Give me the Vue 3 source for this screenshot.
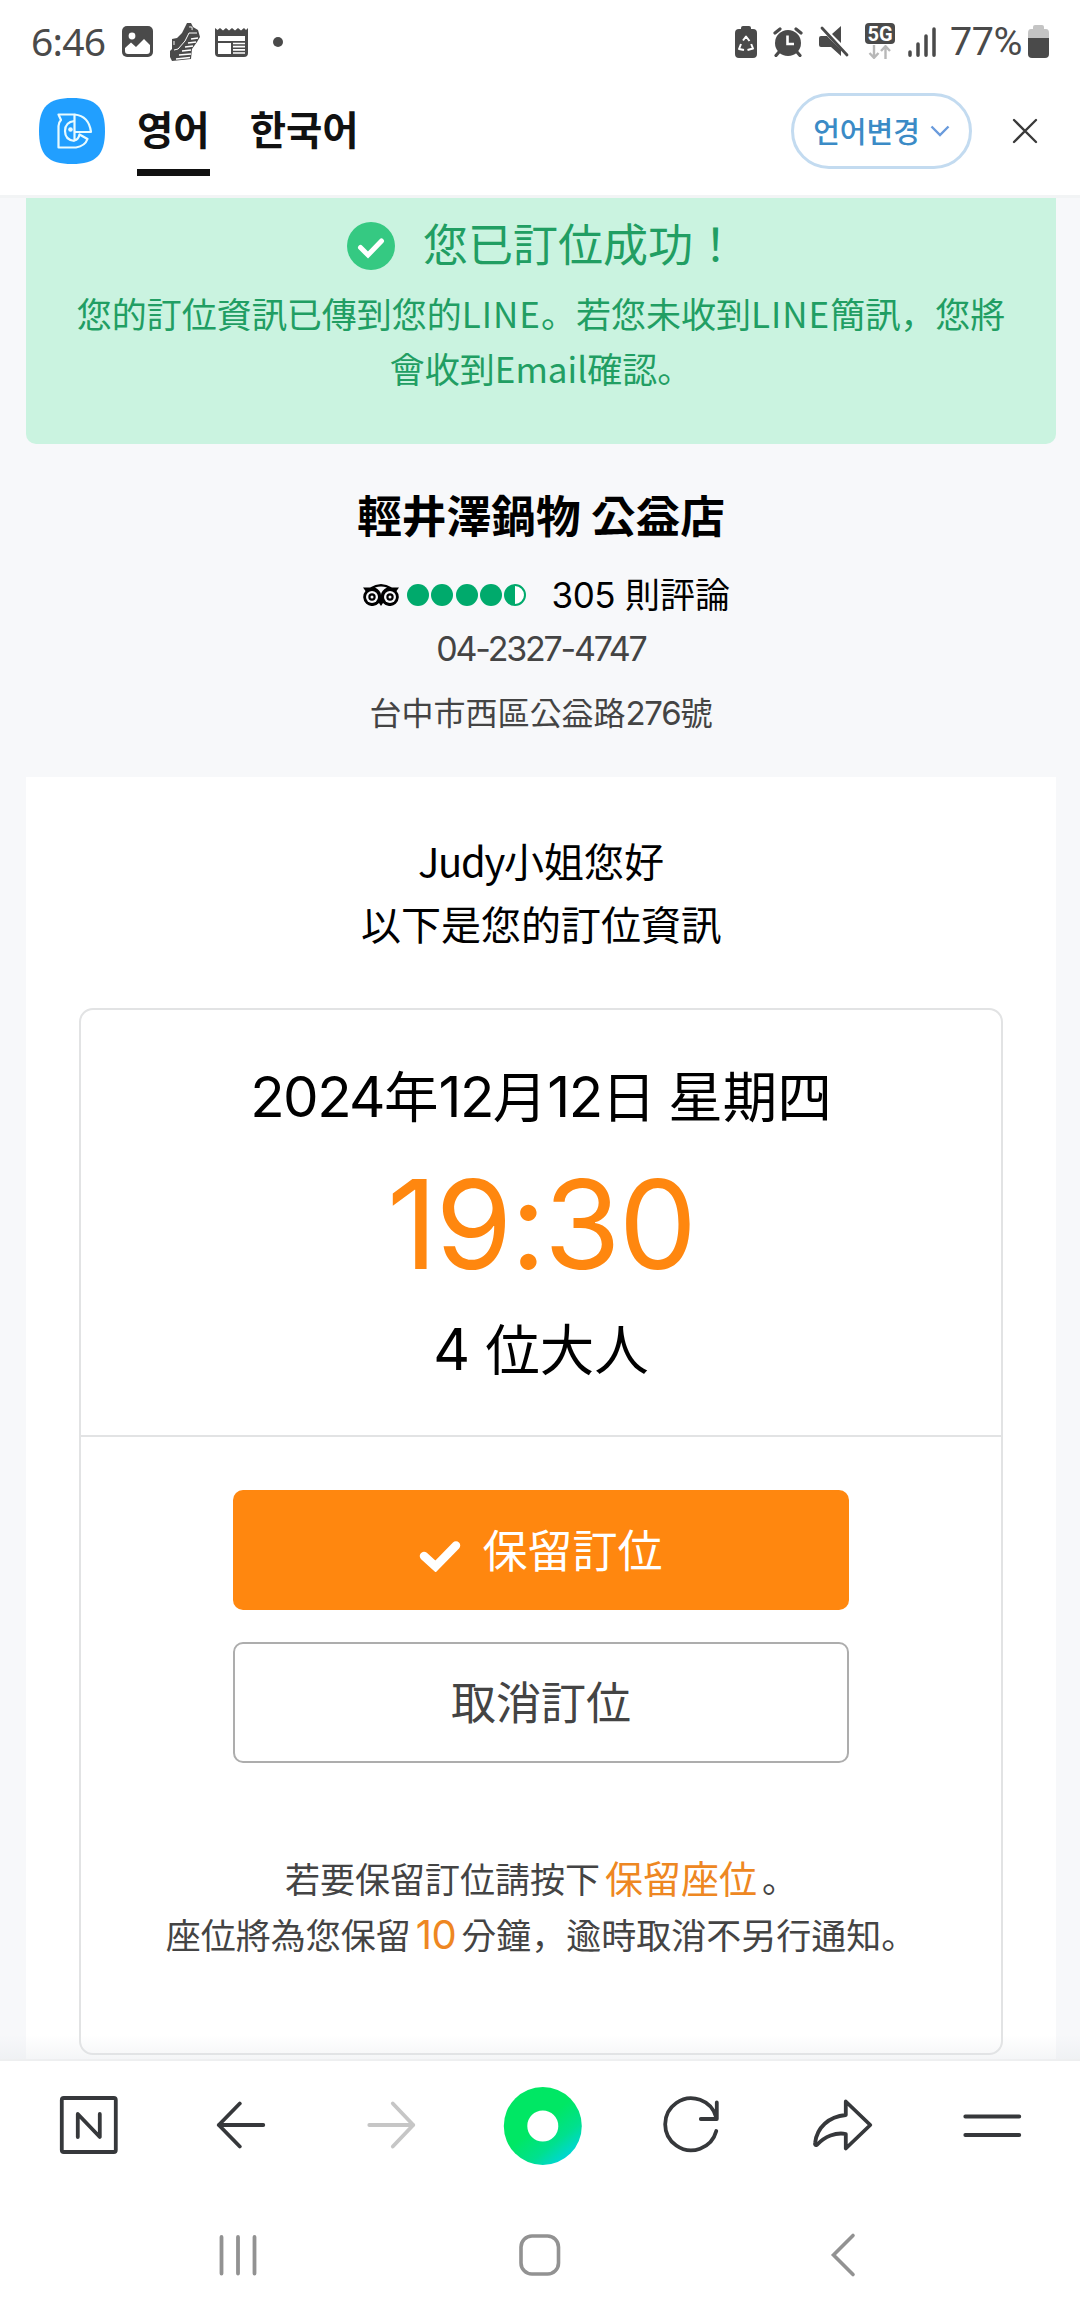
<template>
  <div class="phone">
    <div class="status-bar">
      <div class="status-left">
        <span class="clock">6:46</span>
        <svg class="ic-image" width="31" height="31" viewBox="0 0 31 31">
          <rect width="31" height="31" rx="5" fill="#4a4a4a" />
          <circle cx="10" cy="10" r="3.4" fill="#fff" />
          <path d="M3 22 L9 16.500 L14 21 L22 13 L28 19 V25 Q28 28 25 28 H6 Q3 28 3 25 Z" fill="#fff" />
        </svg>
        <svg class="ic-shoe" width="32" height="40" viewBox="0 0 32 40">
          <path d="M17 3 L18 1 L22 1 L24 5 L29 8 L31 15 L28 20 L23 27 L22 37 L3 39 L1 35 L1 29 L3 27 V17 L8 16 L13 11 Z" fill="#4a4a4a" />
          <path d="M5 28 L9 27 L16 19 L20 11 L28 11" fill="none" stroke="#fff" stroke-width="1" />
          <path d="M22 17 L29 16 M19 21 L27 20 M16 25 L24 24 M13 29 L22 28 M10 33 L22 32 M7 37 L21 35.500" stroke="#fff" stroke-width="1.500" />
          <path d="M20 5 Q24 4 23 8 M5 19 V23" fill="none" stroke="#ddd" stroke-width="1.200" />
        </svg>
        <svg class="ic-news" width="33" height="30" viewBox="0 0 33 30">
          <path d="M0 1 L2.500 3 L5 1 L8 3.500 L11 1 L14 3.500 L17 1 L20 3.500 L23 1 L26 3.500 L29 1 L31 3 L33 1 V26 Q33 30 29 30 H4 Q0 30 0 26 Z" fill="#4a4a4a" />
          <path d="M3 9 H30 V14 H3 Z M3 16 H16 V27 H3 Z" fill="#fff" />
          <path d="M18 16.500 H30 M18 19.700 H30 M18 22.900 H30 M18 26 H30" stroke="#fff" stroke-width="1.700" />
        </svg>
        <span class="dot"></span>
      </div>
      <div class="status-right">
        <svg class="ic-saver" width="22" height="32" viewBox="0 0 22 32">
          <path d="M6 3 V2 Q6 0 8 0 H14 Q16 0 16 2 V3 H18 Q22 3 22 7 V28 Q22 32 18 32 H4 Q0 32 0 28 V7 Q0 3 4 3 Z" fill="#4a4a4a" />
          <path d="M8 14.500 L11 10.500 L14.500 15 M16.200 18 L18 22.500 L12.500 24 M9 24 L4 23 L6 18" fill="none" stroke="#fff" stroke-width="2" stroke-linejoin="round" />
        </svg>
        <svg class="ic-alarm" width="30" height="30" viewBox="0 0 30 30">
          <circle cx="15" cy="16" r="13" fill="#4a4a4a" />
          <path d="M2 6 L7 2 M28 6 L23 2 M6 25 L3 28.500 M24 25 L27 28.500" stroke="#4a4a4a" stroke-width="3.200" stroke-linecap="round" />
          <path d="M14.500 8.500 V17 H21" fill="none" stroke="#fff" stroke-width="2.600" />
        </svg>
        <svg class="ic-mute" width="30" height="31" viewBox="0 0 30 31">
          <path d="M0 12 Q0 10 2 10 H8 L22 24 V30 L12 21 H2 Q0 21 0 19 Z M13 8 L22 0 V17 Z" fill="#4a4a4a" />
          <path d="M3 2 L28 29" stroke="#4a4a4a" stroke-width="2.800" stroke-linecap="round" />
        </svg>
        <div class="network">
          <span class="net-label">5G</span>
          <svg width="24" height="14" viewBox="0 0 24 14">
            <path d="M6 0 V12.500 M1.500 8 L6 12.800 L10.500 8 M17.500 14 V1.500 M13 6 L17.500 1.200 L22 6" fill="none" stroke="#b8b8b8" stroke-width="2.400" />
          </svg>
        </div>
        <svg class="ic-signal" width="28" height="30" viewBox="0 0 28 30">
          <path d="M2 25 V28.200 M10 17 V28.200 M18 9 V28.200 M26 2 V28.200" stroke="#4a4a4a" stroke-width="3.500" stroke-linecap="round" />
        </svg>
        <span class="percent">77%</span>
        <svg class="ic-battery" width="21" height="33" viewBox="0 0 21 33">
          <path d="M5 4 V2 Q5 0 7 0 H14 Q16 0 16 2 V4 H18 Q21 4 21 8 V13 H0 V8 Q0 4 3 4 Z" fill="#c4c4c4" />
          <path d="M0 13 H21 V29 Q21 33 17 33 H4 Q0 33 0 29 Z" fill="#4a4a4a" />
        </svg>
      </div>
    </div>

    <div class="translate-bar">
      <svg class="logo" width="66" height="66" viewBox="0 0 66 66">
        <path d="M33 0 C57 0 66 9 66 33 C66 57 57 66 33 66 C9 66 0 57 0 33 C0 9 9 0 33 0 Z" fill="#219fff" />
        <g fill="none" stroke="#e8fbff" stroke-width="2.200" stroke-linejoin="round">
          <path d="M35.500 16.500 H19.500 L22 22 Q19.500 24.500 19.500 28 V49.500 H37 Q46 48 48.500 41 L40.500 36.500 Q39.500 41.500 35.500 42.500 Z" />
          <path d="M35.500 16.500 Q50 18 52 34 H35.500" />
          <path d="M35.500 23 Q26 24 26 33 Q26 42 35.500 43" />
        </g>
        <circle cx="31.500" cy="31.500" r="2.300" fill="#e8fbff" />
      </svg>
      <div class="langs">
        <button
          v-for="lang in langs"
          :key="lang"
          class="lang"
          :class="{ active: lang === current }"
          @click="current = lang"
        >{{ lang }}</button>
      </div>
      <button class="change">
        <span>언어변경</span>
        <svg width="20" height="12" viewBox="0 0 20 12">
          <path d="M1.500 1.500 L10 10 L18.500 1.500" fill="none" stroke="#6a9bdc" stroke-width="2.400" />
        </svg>
      </button>
      <svg class="close" width="26" height="26" viewBox="0 0 26 26">
        <path d="M2 2 L24 24 M24 2 L2 24" stroke="#3a3a3a" stroke-width="2.300" stroke-linecap="round" />
      </svg>
    </div>

    <div class="page">
      <div class="banner">
        <div class="banner-title">
          <svg width="48" height="48" viewBox="0 0 48 48">
            <circle cx="24" cy="24" r="24" fill="#35c982" />
            <path d="M13.500 25.500 L21 33 L34.500 19" fill="none" stroke="#fff" stroke-width="5" stroke-linecap="round" stroke-linejoin="miter" />
          </svg>
          <span>您已訂位成功！</span>
        </div>
        <p class="banner-text">您的訂位資訊已傳到您的<span class="latin">LINE</span>。若您未收到<span class="latin">LINE</span>簡訊，您將<br>會收到<span class="email">Email</span>確認。</p>
      </div>

      <div class="shop">
        <h1>輕井澤鍋物 公益店</h1>
        <div class="rating">
          <svg class="owl" width="36" height="22" viewBox="0 0 36 22">
            <path d="M0 3.500 H7 Q18 -3.500 29 3.500 H36 L33.500 7 A9 9 0 1 1 20 19 L18 22 L16 19 A9 9 0 1 1 2.500 7 Z" fill="#000" />
            <path d="M12 3.500 Q18 1.500 24 3.500 Q18.500 6 18 11 Q17.500 6 12 3.500 Z" fill="#f7f8fa" />
            <circle cx="9" cy="13" r="6" fill="#f7f8fa" />
            <circle cx="27" cy="13" r="6" fill="#f7f8fa" />
            <circle cx="9" cy="13" r="3.700" fill="#000" />
            <circle cx="27" cy="13" r="3.700" fill="#000" />
            <circle cx="9" cy="13" r="1.500" fill="#f7f8fa" />
            <circle cx="27" cy="13" r="1.500" fill="#f7f8fa" />
          </svg>
          <i v-for="n in 4" :key="n" class="bubble"></i>
          <i class="bubble half"></i>
          <span class="reviews"><b>305</b> 則評論</span>
        </div>
        <div class="tel">04-2327-4747</div>
        <div class="address">台中市西區公益路<b>276</b>號</div>
      </div>

      <div class="sheet">
        <p class="greeting"><span class="name">Judy</span>小姐您好<br>以下是您的訂位資訊</p>
        <div class="card">
          <div class="booking">
            <div class="date"><b>2024</b>年<b>12</b>月<b>12</b>日 星期四</div>
            <div class="time">19:30</div>
            <div class="people"><b>4</b> 位大人</div>
          </div>
          <div class="actions">
            <button class="btn keep">
              <svg width="42" height="32" viewBox="0 0 42 32">
                <path d="M5 16 L16.500 26.500 L37 5.500" fill="none" stroke="#fff" stroke-width="8.500" stroke-linecap="round" />
              </svg>
              <span>保留訂位</span>
            </button>
            <button class="btn cancel">取消訂位</button>
            <p class="hint">若要保留訂位請按下<em>保留座位</em>。<br>座位將為您保留<em class="num">10</em>分鐘，逾時取消不另行通知。</p>
          </div>
        </div>
      </div>
      <div class="fade"></div>
    </div>

    <div class="toolbar">
      <svg viewBox="0 0 100 100">
        <rect x="23.500" y="23" width="54" height="54" rx="2" />
        <path d="M39.500 62 V39 L61.500 62 V39" />
      </svg>
      <svg viewBox="0 0 100 100">
        <path d="M74 50 H29.500 M50.500 28.500 L29.500 50 L50.500 71.500" />
      </svg>
      <svg class="disabled" viewBox="0 0 100 100">
        <path d="M30 50 H74 M53.500 28.500 L74 50 L53.500 71.500" />
      </svg>
      <svg viewBox="0 0 100 100">
        <defs>
          <linearGradient id="home" x1="0.300" y1="0.200" x2="0.850" y2="0.900">
            <stop offset="0.350" stop-color="#00e764" />
            <stop offset="0.700" stop-color="#00e08e" />
            <stop offset="1" stop-color="#00d5dc" />
          </linearGradient>
        </defs>
        <circle class="plain" cx="52.500" cy="51" r="39" fill="url(#home)" />
        <circle class="plain" cx="52.500" cy="51" r="15.500" fill="#fff" />
      </svg>
      <svg viewBox="0 0 100 100">
        <path d="M76 56 A26 26 0 1 1 76 42.500 M76.500 27.500 V44 H60.500" />
      </svg>
      <svg viewBox="0 0 100 100">
        <path d="M54.500 26.500 L79 50 L54.500 73.500 V59 C44.500 57 33.500 61.500 25.500 70 C24 70.500 23.500 69.500 23.800 68 C25.500 52.500 37.500 41.500 54.500 40 Z" />
      </svg>
      <svg viewBox="0 0 100 100">
        <path d="M24 41.500 H78 M24 60 H78" />
      </svg>
    </div>

    <div class="sys-nav">
      <svg viewBox="0 0 60 60">
        <path d="M13.500 12 V48.500 M30 12 V48.500 M46.500 12 V48.500" stroke-width="3.800" />
      </svg>
      <svg viewBox="0 0 60 60">
        <rect x="11" y="11" width="37.500" height="38" rx="11" />
      </svg>
      <svg viewBox="0 0 60 60">
        <path d="M41 10.500 L21.500 30 L41 49.500" />
      </svg>
    </div>
  </div>
</template>

<script setup>
import { ref } from 'vue'

const langs = ['영어', '한국어']
const current = ref('영어')
</script>

<style>
body {
  background: #fff;
}
</style>

<style scoped>
.phone {
  display: flex;
  flex-direction: column;
  width: 1080px;
  height: 2316px;
  overflow: hidden;
  background: #fff;
  font-family: 'Noto Sans CJK KR', 'Noto Sans CJK TC', sans-serif;
  color: #000;
}

svg {
  display: block;
  flex: none;
}

button {
  font: inherit;
  background: none;
  border: 0;
  padding: 0;
  white-space: nowrap;
}

p,
h1 {
  margin: 0;
}

/* digits sit in their own face next to the CJK text */
b {
  font-family: Inter, sans-serif;
  font-weight: 400;
  line-height: 1;
}

/* status bar */
.status-bar {
  display: flex;
  justify-content: space-between;
  align-items: center;
  flex: none;
  height: 83px;
  padding: 0 31px;
  color: #4a4a4a;
}

.status-left,
.status-right {
  display: flex;
  align-items: center;
}

.clock {
  width: 91px;
  margin-top: -2px;
  font: 39px/1 'Noto Sans', sans-serif;
  letter-spacing: -0.8px;
}

.ic-shoe {
  margin-left: 16px;
}

.ic-news {
  margin-left: 14px;
}

.dot {
  width: 10px;
  height: 10px;
  margin-left: 25px;
  border-radius: 50%;
  background: #4a4a4a;
}

.ic-alarm {
  margin-left: 16px;
}

.ic-mute {
  margin-left: 16px;
}

.network {
  display: flex;
  flex-direction: column;
  align-items: center;
  width: 30px;
  height: 38px;
  gap: 1px;
  margin-left: 16px;
}

.net-label {
  width: 30px;
  height: 21px;
  border-radius: 4px;
  background: #4a4a4a;
  color: #fff;
  font: bold 20px/22px Roboto, sans-serif;
  text-align: center;
}

.ic-signal {
  margin-left: 13px;
}

.percent {
  margin-left: 14px;
  width: 78px;
  font: 400 39.5px/1 Roboto, sans-serif;
  letter-spacing: -0.5px;
}

/* translate bar */
.translate-bar {
  display: flex;
  align-items: center;
  flex: none;
  box-sizing: border-box;
  height: 115px;
  padding: 0 42px 16px 39px;
  border-bottom: 3px solid #f2f4f5;
}

.langs {
  display: flex;
  gap: 40px;
  margin-left: 32px;
  height: 93px;
  align-self: flex-start;
}

.lang {
  color: #111;
  font-size: 39.5px;
  font-weight: 700;
  line-height: 90px;
  padding-bottom: 3px;
}

.lang.active {
  box-shadow: inset 0 -7px #111;
}

.change {
  display: flex;
  align-items: center;
  justify-content: center;
  box-sizing: border-box;
  width: 181px;
  height: 76px;
  margin-left: auto;
  gap: 10px;
  border: 3px solid #c3dbf0;
  border-radius: 38px;
  color: #3b8bc6;
  font-size: 29px;
  font-weight: 500;
}

.change span {
  margin-top: -3px;
}

.close {
  margin-left: 40px;
}

/* page */
.page {
  position: relative;
  flex: none;
  height: 1861px;
  padding: 0 24px 0 26px;
  overflow: hidden;
  background: #f7f8fa;
}

.banner {
  height: 246px;
  border-radius: 0 0 10px 10px;
  background: #caf3e0;
  color: #219e63;
  text-align: center;
}

.banner-title {
  display: flex;
  align-items: center;
  justify-content: center;
  box-sizing: border-box;
  height: 87px;
  padding: 1px 0 0 3px;
  gap: 28px;
  font-size: 45px;
}

.banner-title svg {
  margin-top: 8px;
}

.banner-text {
  font-size: 35px;
  line-height: 55px;
  white-space: nowrap;
}

.latin {
  letter-spacing: 1px;
}

.shop {
  display: flex;
  flex-direction: column;
  align-items: center;
  height: 333px;
}

.shop h1 {
  margin-top: 37px;
  font-size: 44.7px;
  font-weight: 700;
  line-height: 66px;
}

.rating {
  display: flex;
  align-items: center;
  height: 54px;
  margin-top: 21px;
  padding-left: 11px;
  font-size: 35px;
}

.owl {
  margin-right: 8px;
}

.bubble {
  width: 22px;
  height: 22px;
  margin-right: 2.3px;
  border-radius: 50%;
  background: #00aa6c;
}

.half {
  box-sizing: border-box;
  border: 2.5px solid #00aa6c;
  background: linear-gradient(90deg, #00aa6c 50%, #fff 50%);
}

.reviews {
  margin-left: 23px;
  margin-top: -6px;
}

.reviews b {
  letter-spacing: -0.5px;
  margin-right: 2px;
}

.tel {
  font: 34px/54px Inter, sans-serif;
  letter-spacing: -2.2px;
  color: #444;
}

.address {
  margin-top: 8px;
  font-size: 32px;
  line-height: 54px;
  color: #444;
}

.address b {
  font-size: 33px;
  letter-spacing: -1.2px;
}

.sheet {
  height: 1282px;
  background: #fff;
}

.greeting {
  box-sizing: border-box;
  padding-top: 52px;
  height: 231px;
  font-size: 40px;
  line-height: 63px;
  text-align: center;
}

.name {
  letter-spacing: -1.3px;
}

.card {
  box-sizing: border-box;
  width: 924px;
  height: 1047px;
  margin: 0 auto;
  border: 2px solid #e2e3e4;
  border-radius: 14px;
}

.booking {
  display: flex;
  flex-direction: column;
  align-items: center;
  box-sizing: border-box;
  height: 427px;
  border-bottom: 2px solid #e2e3e4;
}

.date,
.people {
  font-size: 54.5px;
  line-height: 80px;
}

.date {
  margin-top: 44px;
}

.date b {
  font-size: 56.5px;
  letter-spacing: -1.6px;
}

.people b {
  font-size: 57px;
  margin-right: 3px;
}

.time {
  color: #ff870f;
  font: 124px/130px Inter, sans-serif;
  letter-spacing: -2px;
  margin-top: 25px;
}

.people {
  margin-top: 18px;
}

.actions {
  display: flex;
  flex-direction: column;
  align-items: center;
  padding-top: 53px;
}

.btn {
  display: flex;
  align-items: center;
  justify-content: center;
  box-sizing: border-box;
  width: 616px;
  height: 120px;
  border-radius: 10px;
  font-size: 45px;
  padding-bottom: 4px;
}

.keep {
  gap: 21px;
  background: #ff870f;
  color: #fff;
}

.keep svg {
  margin-top: 15px;
}

.cancel {
  height: 121px;
  margin-top: 32px;
  border: 2px solid #adadad;
  color: #444;
}

.hint {
  margin-top: 87px;
  color: #444;
  font-size: 35px;
  line-height: 56px;
  text-align: center;
  white-space: nowrap;
}

.hint em {
  margin: 0 5px;
  color: #ee8722;
  font-size: 38px;
  font-style: normal;
  line-height: 1;
}

.hint .num {
  font-family: Inter, sans-serif;
  font-size: 40px;
  letter-spacing: -0.5px;
}

.fade {
  position: absolute;
  left: 0;
  right: 0;
  bottom: 0;
  height: 24px;
  background: linear-gradient(rgba(225, 228, 232, 0), rgba(225, 228, 232, 0.35));
}

/* browser toolbar */
.toolbar {
  display: flex;
  align-items: center;
  flex: none;
  box-sizing: border-box;
  height: 131px;
  padding: 0 13px 2px;
  border-top: 2px solid #eeeff0;
}

.toolbar svg {
  flex: 1;
  height: 100px;
  fill: none;
  stroke: #36383b;
  stroke-width: 3.8;
  stroke-linecap: round;
  stroke-linejoin: round;
}

.toolbar .disabled {
  stroke: #c6c6c6;
}

.toolbar .plain {
  stroke: none;
}

.sys-nav {
  display: flex;
  align-items: center;
  flex: none;
  height: 126px;
  padding: 4px 87px 0;
  box-sizing: border-box;
}

.sys-nav svg {
  flex: 1;
  height: 60px;
  fill: none;
  stroke: #929292;
  stroke-width: 3.6;
  stroke-linecap: round;
}
</style>
